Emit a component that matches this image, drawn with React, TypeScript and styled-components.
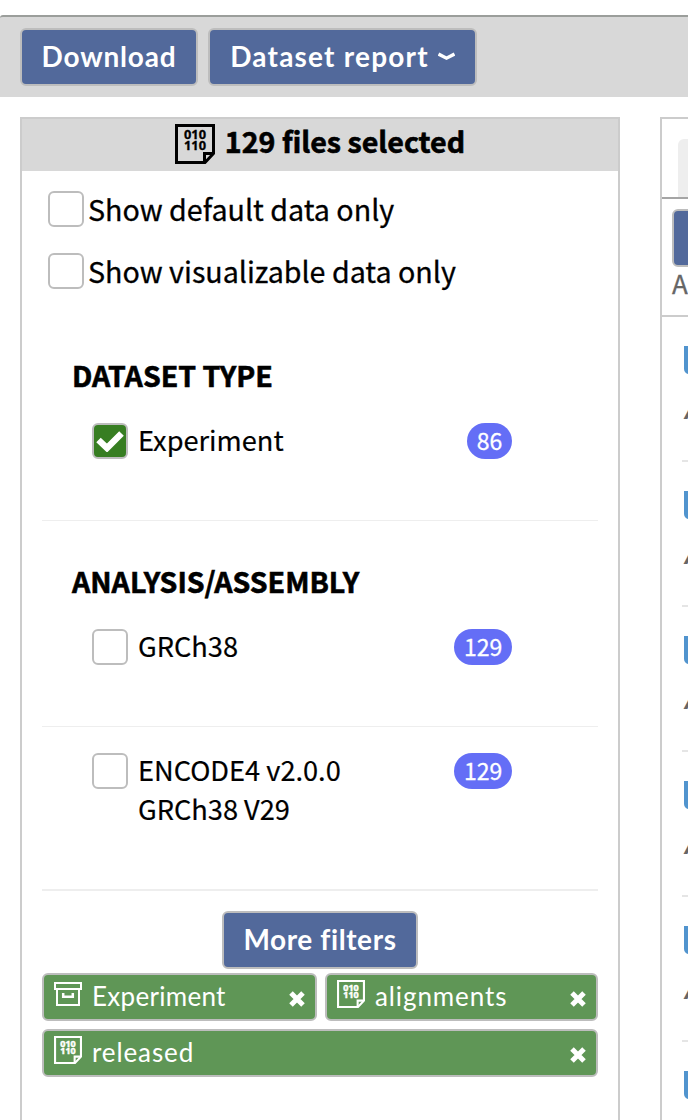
import React from "react";
import styled, { createGlobalStyle, css } from "styled-components";

const GlobalStyle = createGlobalStyle`
  *, *::before, *::after { box-sizing: border-box; }
  body {
    margin: 0;
    background: #fff;
    color: #000;
    font-family: "Noto Sans CJK JP", "Noto Sans", sans-serif;
    overflow: hidden;
  }
`;

const Page = styled.div`
  width: 688px;
  height: 1120px;
  padding-top: 15px;
  overflow: hidden;
`;

const Toolbar = styled.div`
  display: flex;
  gap: 10px;
  height: 82px;
  padding: 11px 20px 0;
  background: #d8d8d8;
  border-top: 2px solid #9b9e9b;
  border-top-left-radius: 3px;
`;

const Button = styled.button<{ $width: number; $spacing?: number }>`
  display: flex;
  align-items: center;
  justify-content: center;
  flex: none;
  width: ${(p) => p.$width}px;
  height: 58px;
  padding: 0 0 2px;
  border: 2px solid #bdbdbd;
  border-radius: 6px;
  background: #52699b;
  color: #fff;
  font: 700 28px/36px Lato, sans-serif;
  letter-spacing: ${(p) => p.$spacing ?? 0}px;
  white-space: nowrap;
`;

const Chevron = styled.svg`
  flex: none;
  width: 17px;
  height: 9px;
  margin-left: 9px;
`;

const Columns = styled.div`
  display: flex;
  gap: 40px;
  margin: 20px 0 0 20px;
`;

const Panel = styled.section`
  flex: none;
  width: 600px;
  height: 1020px;
  border: 2px solid #ccc;
`;

const PanelHeader = styled.header`
  display: flex;
  align-items: flex-start;
  justify-content: center;
  gap: 10px;
  height: 52px;
  padding-top: 5px;
  background: #d8d8d8;
  font-size: 28.6px;
  font-weight: 700;
  line-height: 34px;
  white-space: nowrap;
  -webkit-text-stroke: 0.6px #000;
`;

const Toggles = styled.div`
  display: flex;
  flex-direction: column;
  gap: 26px;
  padding: 20px 26px 0;
`;

const Toggle = styled.label`
  display: flex;
  gap: 4px;
  height: 36px;
  font-size: 28.65px;
  line-height: 36px;
  white-space: nowrap;
  -webkit-text-stroke: 0.3px #000;
`;

const Checkbox = styled.span<{ $checked?: boolean }>`
  display: flex;
  align-items: center;
  justify-content: center;
  flex: none;
  width: 36px;
  height: 36px;
  border: 2px solid #bdbdbd;
  border-radius: 6px;
  background: ${(p) => (p.$checked ? "#377e22" : "#fff")};
`;

const Facets = styled.div`
  margin: 0 20px;
  padding-top: 66px;
  border-bottom: 2px solid #eee;
`;

const Facet = styled.div<{ $height: number; $last?: boolean }>`
  height: ${(p) => p.$height}px;
  padding-left: 30px;
  ${(p) =>
    !p.$last &&
    css`
      border-bottom: 1px solid #eee;
    `}
`;

const FacetTitle = styled.h2<{ $offset?: number }>`
  margin: 0;
  padding-top: ${(p) => p.$offset ?? 0}px;
  font-size: 28.5px;
  font-weight: 700;
  line-height: 40px;
  white-space: nowrap;
  -webkit-text-stroke: 0.6px #000;
`;

const Term = styled.div<{ $top: number }>`
  display: flex;
  width: 440px;
  padding: ${(p) => p.$top}px 0 0 20px;
`;

const TermLabel = styled.span`
  flex: 1;
  margin: -3px 0 0 10px;
  font-size: 27.2px;
  line-height: 39px;
  white-space: pre-line;
  -webkit-text-stroke: 0.2px #000;
`;

const Count = styled.span`
  height: 36px;
  margin-left: auto;
  padding: 0 9.8px;
  border-radius: 18px;
  background: #646ef6;
  color: #fff;
  font-size: 23px;
  line-height: 34px;
  -webkit-text-stroke: 0.3px #fff;
`;

const More = styled.div`
  display: flex;
  justify-content: center;
  padding: 20px 0 4px;
`;

const Tags = styled.div`
  display: flex;
  flex-wrap: wrap;
  gap: 8px;
  margin: 0 20px;
`;

const Tag = styled.div<{ $width: number }>`
  display: flex;
  align-items: flex-start;
  width: ${(p) => p.$width}px;
  height: 48px;
  padding: 5px 9px 0 10px;
  border: 2px solid #bdbdbd;
  border-radius: 6px;
  background: #5f9656;
  color: #fff;
`;

const TagText = styled.span<{ $spacing: number }>`
  flex: 1;
  margin: -1px 0 0 10px;
  font: 400 26px/34px Lato, sans-serif;
  letter-spacing: ${(p) => p.$spacing}px;
`;

const CloseIcon = styled.svg`
  flex: none;
  width: 18px;
  height: 18px;
  margin-top: 10px;
`;

const Results = styled(Panel)`
  width: 300px;
`;

const TabStrip = styled.div`
  height: 80px;
  padding: 20px 0 0 16px;
  border-bottom: 2px solid #a5a5a5;
`;

const Tab = styled.div`
  height: 58px;
  border-radius: 6px 0 0 0;
  background: #eee;
`;

const ResultTools = styled.div`
  height: 118px;
  padding: 10px 0 0 10px;
  border-bottom: 2px solid #ccc;
`;

const Assay = styled.div`
  margin-top: -2px;
  color: #666;
  font: 26px/36px "Noto Sans CJK JP", sans-serif;
  -webkit-text-stroke: 0.3px #666;
`;

const ResultRow = styled.div`
  height: 145px;
  margin-left: 20px;
  padding: 29px 0 0 2px;
  border-bottom: 2px solid #e5e5e5;
`;

const Status = styled.div`
  height: 28px;
  border-radius: 0 0 0 5px;
  background: #428bca;
  opacity: 0.92;
`;

const ResultText = styled.div`
  padding: 18px 0 0 1px;
  color: #666;
  font: italic 700 24px/36px "Open Sans", sans-serif;
`;

const LargeIcon = styled.svg`
  flex: none;
  width: 40px;
  height: 40px;
  fill: currentColor;
  font: 700 13px "Noto Sans", sans-serif;
`;

const SmallIcon = styled(LargeIcon)`
  width: 28px;
  height: 28px;
`;

function FileIcon({ large = false }: { large?: boolean }) {
  const IconSvg = large ? LargeIcon : SmallIcon;
  const digits = {
    x: 9,
    textLength: 22,
    lengthAdjust: "spacingAndGlyphs",
    stroke: "currentColor",
    strokeWidth: large ? 0.3 : 0.7,
  } as const;
  return (
    <IconSvg viewBox="0 0 40 40">
      <path d="M1.5 1.5H38.5V29.5L30 38.5H1.5Z" fill="none" stroke="currentColor" strokeWidth="3" />
      <path d="M29.5 38.5V29.5H38.5" fill="none" stroke="currentColor" strokeWidth="3" />
      <text y="15.2" {...digits}>010</text>
      <text y="26.2" {...digits}>110</text>
    </IconSvg>
  );
}

const BoxSvg = styled.svg`
  flex: none;
  width: 28px;
  height: 24px;
  margin-top: 2px;
`;

function BoxIcon() {
  return (
    <BoxSvg viewBox="0 0 28 24" fill="none" stroke="#fff" strokeWidth="2">
      <path d="M1 1H27V7H1Z" />
      <path d="M3 7V23H25V7" />
      <path d="M9.2 11V14.7H18.8V11" strokeWidth="2.5" />
    </BoxSvg>
  );
}

function Close() {
  return (
    <CloseIcon viewBox="0 0 18 18">
      <path d="M3 3L15 15M15 3L3 15" stroke="#fff" strokeWidth="5" />
    </CloseIcon>
  );
}

const facets = [
  { title: "DATASET TYPE", label: "Experiment", count: 86, checked: true, height: 166, offset: 0, top: 28 },
  { title: "ANALYSIS/ASSEMBLY", label: "GRCh38", count: 129, checked: false, height: 206, offset: 40, top: 28 },
  { title: "", label: "ENCODE4 v2.0.0\nGRCh38 V29", count: 129, checked: false, height: 162, offset: 0, top: 26 },
];

export default function App() {
  return (
    <Page>
      <GlobalStyle />
      <Toolbar>
        <Button $width={178} $spacing={0.8}>Download</Button>
        <Button $width={269} $spacing={1.2}>
          Dataset report
          <Chevron viewBox="0 0 17 9">
            <path d="M0.5 2L8.5 6.2L16.5 2" fill="none" stroke="#fff" strokeWidth="3.4" />
          </Chevron>
        </Button>
      </Toolbar>
      <Columns>
        <Panel>
          <PanelHeader>
            <FileIcon large />
            129 files selected
          </PanelHeader>
          <Toggles>
            <Toggle><Checkbox />Show default data only</Toggle>
            <Toggle><Checkbox />Show visualizable data only</Toggle>
          </Toggles>
          <Facets>
            {facets.map((f, i) => (
              <Facet key={f.label} $height={f.height} $last={i === 2}>
                {f.title && <FacetTitle $offset={f.offset}>{f.title}</FacetTitle>}
                <Term $top={f.top}>
                  <Checkbox $checked={f.checked}>
                    {f.checked && (
                      <svg width="28" height="22" viewBox="0 0 28 22">
                        <path d="M2.5 10L11 18L25.5 3.5" fill="none" stroke="#fff" strokeWidth="6.5" />
                      </svg>
                    )}
                  </Checkbox>
                  <TermLabel>{f.label}</TermLabel>
                  <Count>{f.count}</Count>
                </Term>
              </Facet>
            ))}
          </Facets>
          <More><Button $width={196} $spacing={0.6}>More filters</Button></More>
          <Tags>
            <Tag $width={275}><BoxIcon /><TagText $spacing={0.3}>Experiment</TagText><Close /></Tag>
            <Tag $width={273}><FileIcon /><TagText $spacing={0.9}>alignments</TagText><Close /></Tag>
            <Tag $width={556}><FileIcon /><TagText $spacing={0.9}>released</TagText><Close /></Tag>
          </Tags>
        </Panel>
        <Results>
          <TabStrip><Tab /></TabStrip>
          <ResultTools>
            <Button $width={200} />
            <Assay>A</Assay>
          </ResultTools>
          {[0, 1, 2, 3, 4, 5].map((n) => (
            <ResultRow key={n}><Status /><ResultText>A</ResultText></ResultRow>
          ))}
        </Results>
      </Columns>
    </Page>
  );
}
